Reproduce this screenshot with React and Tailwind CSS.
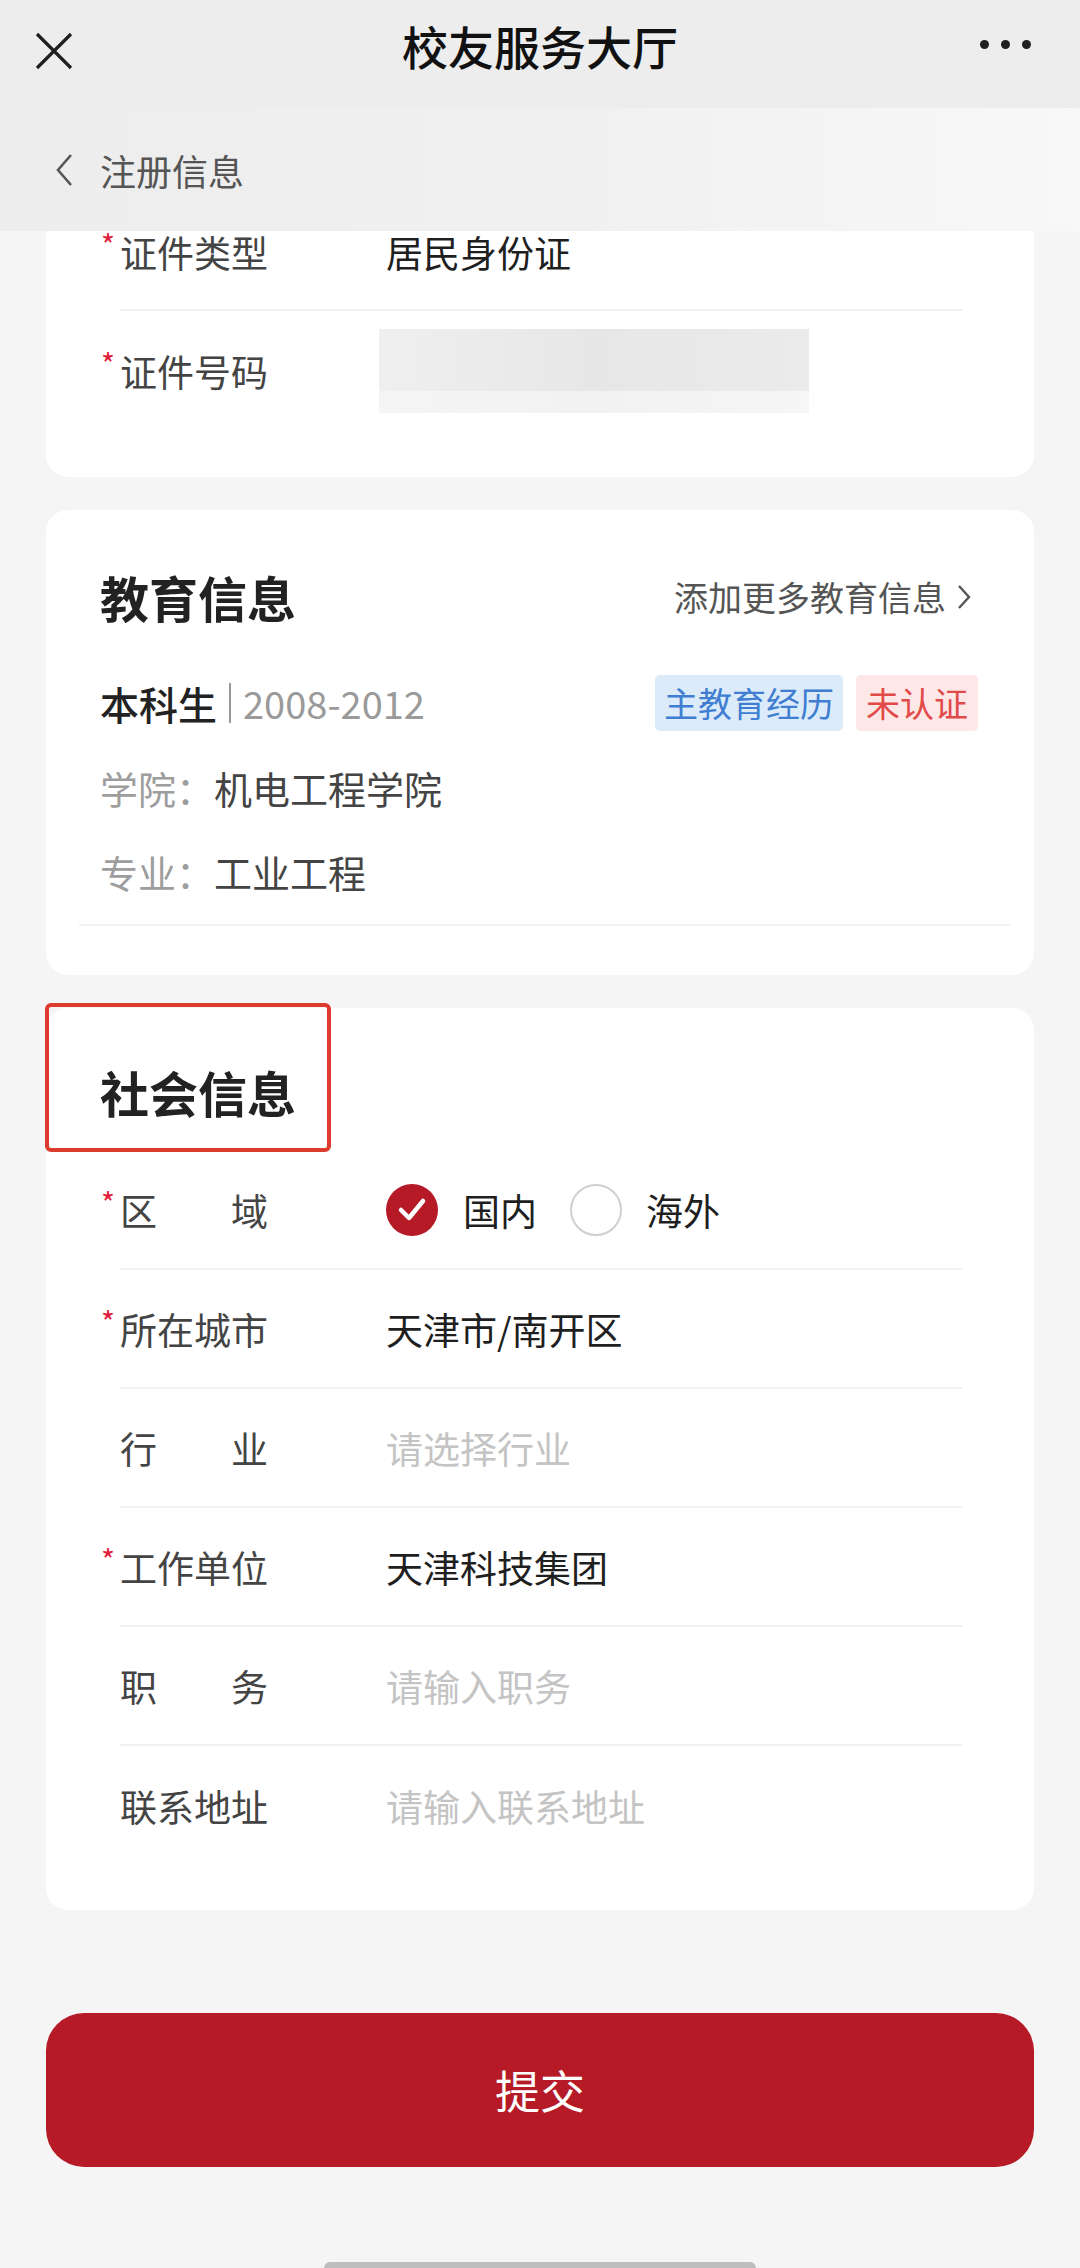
import React from "react";

function Row({ req, label, value, placeholder, last, first, children }) {
  const chars = Array.isArray(label) ? label : [label];
  return (
    <div
      className={`flex ${first ? "h-[80px] items-start pt-[2px]" : "h-[119px] items-center"} ${
        last ? "" : "border-b-2 border-[#f1f1f1]"
      }`}
    >
      <div className="flex items-center h-[38px]">
        <span className="w-[20px] -ml-[20px] text-[30px] leading-none text-[#e0213a] -mt-[16px] pl-[1px]">
          {req ? "*" : ""}
        </span>
        <div className="w-[266px] shrink-0">
          <div className="w-[148px] flex justify-between whitespace-nowrap text-[37px] leading-[38px] text-[#444]">
            {chars.map((c, i) => (
              <span key={i}>{c}</span>
            ))}
          </div>
        </div>
        {children ? (
          children
        ) : value ? (
          <span className="text-[37px] leading-[38px] text-[#1f1f1f] whitespace-nowrap">{value}</span>
        ) : (
          <span className="text-[37px] leading-[38px] text-[#c4c4c4] whitespace-nowrap">{placeholder}</span>
        )}
      </div>
    </div>
  );
}

export default function App() {
  return (
    <div className="w-[1080px] h-[2268px] overflow-hidden bg-[#f5f5f5] font-['Noto_Sans_CJK_SC','Noto_Sans',sans-serif] flex flex-col">
      {/* Top nav */}
      <div className="h-[108px] bg-[#ededed] grid grid-cols-[1fr_auto_1fr] items-center px-[34px] shrink-0">
        <svg width="40" height="38" viewBox="0 0 40 38" className="-mt-[6px]">
          <path d="M3 2 L37 36 M37 2 L3 36" stroke="#1f1f1f" strokeWidth="3.2" fill="none" />
        </svg>
        <span className="text-[46px] leading-[54px] font-medium text-[#111] -mt-[18px] whitespace-nowrap">
          校友服务大厅
        </span>
        <div className="flex gap-[12px] items-center justify-end pr-[15px] -mt-[20px]">
          <span className="w-[9px] h-[9px] rounded-full bg-[#1f1f1f]" />
          <span className="w-[9px] h-[9px] rounded-full bg-[#1f1f1f]" />
          <span className="w-[9px] h-[9px] rounded-full bg-[#1f1f1f]" />
        </div>
      </div>

      {/* Sub header */}
      <div className="h-[123px] bg-gradient-to-r from-[#ededed] via-[#f0f0f0] to-[#f8f8f8] flex items-center pl-[55px] shrink-0">
        <svg width="18" height="34" viewBox="0 0 18 34">
          <path d="M16 2 L3 17 L16 32" stroke="#555" strokeWidth="2.6" fill="none" />
        </svg>
        <span className="ml-[27px] text-[36px] leading-[44px] text-[#555]">注册信息</span>
      </div>

      {/* Card 1 (scrolled under header) */}
      <div className="mx-[46px] bg-white rounded-b-[22px] pb-[47px] shrink-0">
        <div className="ml-[74px] mr-[72px]">
          <Row req first label="证件类型" value="居民身份证" />
          <Row req label="证件号码" last>
            <div className="-ml-[7px] w-[430px] h-[84px] flex flex-col">
              <div className="h-[62px] bg-gradient-to-r from-[#efefef] via-[#e7e7e7] to-[#ebebeb]" />
              <div className="h-[22px] bg-gradient-to-r from-[#f5f5f5] via-[#f2f2f2] to-[#f6f6f6]" />
            </div>
          </Row>
        </div>
      </div>

      {/* Education card */}
      <div className="mt-[33px] mx-[46px] bg-white rounded-[22px] pt-[63px] pb-[49px] shrink-0">
        <div className="flex items-center justify-between pl-[54px] pr-[62px]">
          <span className="text-[49px] leading-[48px] font-bold text-[#222]">教育信息</span>
          <div className="flex items-center">
            <span className="text-[34px] leading-[44px] text-[#555]">添加更多教育信息</span>
            <svg width="16" height="26" viewBox="0 0 16 26" className="ml-[10px]">
              <path d="M3 2 L13 13 L3 24" stroke="#555" strokeWidth="2.4" fill="none" />
            </svg>
          </div>
        </div>
        <div className="mt-[54px] h-[56px] flex items-center justify-between pl-[54px] pr-[56px]">
          <div className="flex items-center">
            <span className="text-[39px] leading-[48px] font-medium text-[#222]">本科生</span>
            <span className="mx-[12px] w-[2px] h-[40px] bg-[#999]" />
            <span className="text-[38px] leading-[48px] text-[#9a9a9a]">2008-2012</span>
          </div>
          <div className="flex items-center gap-[13px]">
            <span className="h-[56px] px-[9px] flex items-center rounded-[5px] bg-[#dcebfa] text-[#3f7ed0] text-[34px] leading-[40px]">
              主教育经历
            </span>
            <span className="h-[56px] px-[10px] flex items-center rounded-[5px] bg-[#fde7e7] text-[#e24a4a] text-[34px] leading-[40px]">
              未认证
            </span>
          </div>
        </div>
        <div className="mt-[29px] pl-[54px] text-[38px] leading-[56px]">
          <span className="text-[#9d9d9d]">学院：</span>
          <span className="text-[#444]">机电工程学院</span>
        </div>
        <div className="mt-[28px] pl-[54px] text-[38px] leading-[56px]">
          <span className="text-[#9d9d9d]">专业：</span>
          <span className="text-[#444]">工业工程</span>
        </div>
        <div className="mt-[24px] ml-[33px] mr-[24px] h-[2px] bg-[#f2f2f2]" />
      </div>

      {/* Social card */}
      <div className="relative mt-[33px] mx-[46px] bg-white rounded-[22px] pt-[60px] pb-[45px] shrink-0">
        <div className="absolute -left-[1px] -top-[5px] w-[286px] h-[149px] border-[4px] border-[#dd3b2e] rounded-[6px]" />
        <div className="pl-[54px]">
          <span className="text-[49px] leading-[48px] font-bold text-[#222]">社会信息</span>
        </div>
        <div className="mt-[33px] ml-[74px] mr-[72px]">
          <Row req label={["区", "域"]}>
            <div className="flex items-center">
              <span className="w-[52px] h-[52px] rounded-full bg-[#b51a26] flex items-center justify-center">
                <svg width="30" height="26" viewBox="0 0 30 26">
                  <path d="M4 13 L12 21 L26 4" stroke="#fff" strokeWidth="4.5" fill="none" strokeLinecap="round" strokeLinejoin="round" />
                </svg>
              </span>
              <span className="ml-[25px] text-[37px] leading-[38px] text-[#1f1f1f]">国内</span>
              <span className="ml-[33px] w-[52px] h-[52px] rounded-full border-2 border-[#cfcfcf]" />
              <span className="ml-[24px] text-[37px] leading-[38px] text-[#1f1f1f]">海外</span>
            </div>
          </Row>
          <Row req label="所在城市" value="天津市/南开区" />
          <Row label={["行", "业"]} placeholder="请选择行业" />
          <Row req label="工作单位" value="天津科技集团" />
          <Row label={["职", "务"]} placeholder="请输入职务" />
          <Row label="联系地址" placeholder="请输入联系地址" last />
        </div>
      </div>

      {/* Submit button */}
      <div className="mt-[103px] mx-[46px] h-[154px] rounded-[38px] bg-[#b51a26] flex items-center justify-center shrink-0">
        <span className="text-[45px] leading-[54px] text-white">提交</span>
      </div>

      {/* Home indicator */}
      <div className="mt-[95px] flex justify-center shrink-0">
        <div className="w-[432px] h-[12px] rounded-full bg-[#bdbdbd]" />
      </div>
    </div>
  );
}
